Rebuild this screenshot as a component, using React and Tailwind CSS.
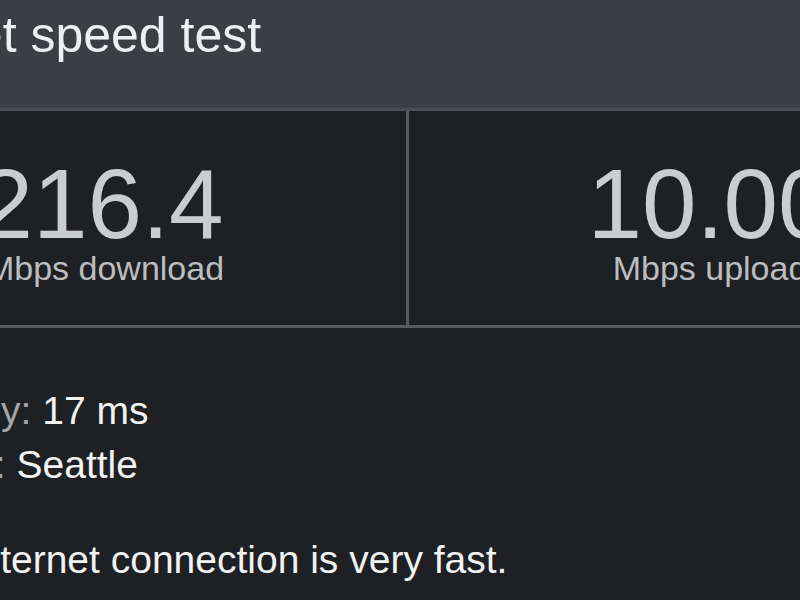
import React from "react";

export default function App() {
  return (
    <div className="w-[800px] h-[600px] overflow-hidden bg-[#1f2023]" style={{ fontFamily: '"Liberation Sans", Arial, sans-serif' }}>
      <div className="w-[1400px] ml-[-196px]">
        <header className="h-[111px] bg-[#3b3e42] border-b-[3px] border-[#4b4f53] pl-[43px] pt-[10px]">
          <h1 className="text-[50px] leading-[50px] text-[#eeeff0] whitespace-nowrap">Internet speed test</h1>
        </header>
        <div className="flex w-[1208px] border-b-[3px] border-[#575b5f]">
          <div className="w-[605px] h-[214px] border-r-[3px] border-[#575b5f] flex flex-col items-center pt-[44px]">
            <div className="text-[98px] leading-[98px] text-[#cbccce] -ml-[8px]">216.4</div>
            <div className="text-[34px] leading-[34px] -mt-[2px] text-[#bbbdc0]">Mbps download</div>
          </div>
          <div className="w-[602px] h-[214px] flex flex-col items-center pt-[44px]">
            <div className="text-[98px] leading-[98px] text-[#cbccce]">10.00</div>
            <div className="text-[34px] leading-[34px] -mt-[2px] text-[#bbbdc0]">Mbps upload</div>
          </div>
        </div>
        <div className="pl-[80px] pt-[56px] text-[39px] whitespace-nowrap">
          <div className="leading-[54px]"><span className="text-[#a4a6aa]">Latency:</span> <span className="text-[#f1f2f3]">17 ms</span></div>
          <div className="leading-[54px] -ml-[4px]"><span className="text-[#a4a6aa]">Server:</span> <span className="text-[#f1f2f3]">Seattle</span></div>
          <div className="leading-[54px] mt-[41px] -ml-[6px] text-[#f1f2f3]">Your Internet connection is very fast.</div>
        </div>
      </div>
    </div>
  );
}
